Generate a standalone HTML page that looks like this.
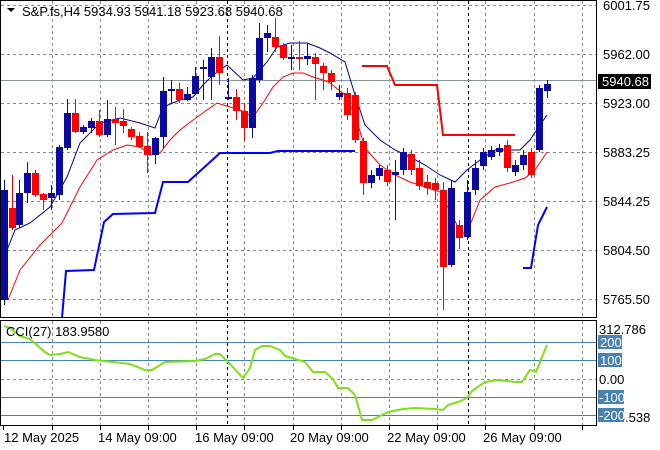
<!DOCTYPE html>
<html><head><meta charset="utf-8"><style>
html,body{margin:0;padding:0;background:#fff;}
svg{display:block;font-family:"Liberation Sans",sans-serif;font-size:13px;}
</style></head><body>
<svg id="s" width="660" height="450" xmlns="http://www.w3.org/2000/svg">
<rect width="660" height="450" fill="#fff"/>
<g id="grid" stroke="#7f8a96" stroke-dasharray="3,3" stroke-width="1"></g>
<g id="ind"></g>
<g id="c"></g>
<rect x="0.5" y="0.5" width="596" height="317" fill="none" stroke="#000"/>
<rect x="0.5" y="320.5" width="596" height="105" fill="none" stroke="#000"/>
<g fill="#000">
<text x="603" y="10">6001.75</text>
<text x="603" y="59">5962.00</text>
<text x="603" y="108">5923.00</text>
<text x="603" y="157">5883.25</text>
<text x="603" y="206">5844.25</text>
<text x="603" y="255">5804.50</text>
<text x="603" y="304">5765.50</text>
<text x="599" y="334">312.786</text>
<text x="599" y="384">0.00</text>
<text x="599" y="422">-256.538</text>
</g>
<rect x="598" y="74" width="53" height="15" fill="#000"/>
<text x="602" y="86" fill="#fff">5940.68</text>
<g fill="#4682b4"><rect x="598" y="335" width="24" height="14"/><rect x="598" y="353" width="24" height="14"/><rect x="598" y="390" width="26" height="14"/><rect x="598" y="408" width="26" height="14"/></g>
<g fill="#fff"><text x="600" y="347">200</text><text x="600" y="365">100</text><text x="599" y="402">-100</text><text x="599" y="420">-200</text></g>
<text x="22" y="16" fill="#000">S&amp;P.fs,H4  5934.93 5941.18 5923.68 5940.68</text>
<path d="M7 8h8l-4 4z" fill="#000"/>
<text x="6" y="336" fill="#000">CCI(27) 183.9580</text>
<g fill="#000">
<text x="4" y="442">12 May 2025</text>
<text x="98" y="442">14 May 09:00</text>
<text x="195" y="442">16 May 09:00</text>
<text x="290" y="442">20 May 09:00</text>
<text x="387" y="442">22 May 09:00</text>
<text x="483" y="442">26 May 09:00</text>
</g>
</svg>
<script>
var NS="http://www.w3.org/2000/svg";
function el(p,t,a){var e=document.createElementNS(NS,t);for(var k in a)e.setAttribute(k,a[k]);p.appendChild(e);return e;}
var g=document.getElementById('grid'),ind=document.getElementById('ind'),c=document.getElementById('c'),s=document.getElementById('s');
[5,54,103,152,201,250,299].forEach(function(y){el(g,'line',{x1:1,x2:596,y1:y+.5,y2:y+.5});});
el(g,'line',{x1:1,x2:596,y1:379.5,y2:379.5});
el(s,'line',{x1:3.5,x2:3.5,y1:426,y2:430,stroke:'#000'});
for(var x=51.5;x<596;x+=48.2){var xx=Math.round(x)+.5;el(g,'line',{x1:xx,x2:xx,y1:1,y2:317});el(g,'line',{x1:xx,x2:xx,y1:321,y2:425});el(s,'line',{x1:xx,x2:xx,y1:426,y2:430,stroke:'#000'});}
[227,468].forEach(function(x){el(ind,'line',{x1:x+.5,x2:x+.5,y1:1,y2:425,stroke:'#000','stroke-dasharray':'3,3'});});
el(ind,'line',{x1:1,x2:596,y1:80.5,y2:80.5,stroke:'#8a949e'});
[342,360,397,415].forEach(function(y){el(ind,'line',{x1:1,x2:596,y1:y+.5,y2:y+.5,stroke:'#4682b4'});});
function pl(pts,col,w){el(ind,'polyline',{points:pts,fill:'none',stroke:col,'stroke-width':w});}
pl("62,318 66,271 94,270 104,222 113,214 155,213 163,182 188,182 220,153 270,153 278,151 355,151","#0000ff",2);
pl("362,66 387,66 395,85 437,85 443,135 515,135","#ff0000",2);
pl("523,268 531,268 538,225 547,207","#0000ff",2);
pl("5,255 15,230 30,223 50,207 67,177 80,143 100,123 120,118 140,123 155,128 163,107 180,100 193,97 203,85 213,75 227,65 243,80 253,78 267,62 277,47 290,43 307,43 320,48 330,53 345,62 355,95 365,125 380,140 395,150 410,157 425,165 440,175 455,182 467,170 480,160 495,150 510,150 520,150 530,140 540,125 547,115","#00008b",1);
pl("8,300 20,270 40,245 62,223 80,187 97,160 113,150 127,145 140,147 150,155 160,153 170,140 180,130 193,120 207,110 217,103 230,107 240,110 253,117 263,103 273,87 283,77 293,73 303,73 313,77 323,80 330,83 345,95 355,115 365,148 380,165 395,175 410,182 425,187 440,192 452,215 462,235 470,225 480,200 495,187 510,183 525,178 535,170 547,152","#ff0000",1);
pl("4,326 10,328 20,336 30,339 45,352 50,355 60,354 68,352 80,357 95,360 130,364 145,370 152,370 165,362 195,361 205,359 215,354 220,354 228,362 243,378 250,368 255,350 262,346 270,346 280,350 285,356 295,359 305,362 313,372 325,372 333,379 338,388 348,388 355,395 362,420 372,420 380,416 388,412 403,409 415,408 435,409 443,410 448,405 458,402 467,398 472,391 485,382 498,380 515,382 522,382 530,370 536,372 542,357 547,345","#7fe01a",2);
var C=[[4,'b',190,300,180,305],[12,'r',208,228,175,230],[19,'b',193,225,180,228],[27,'b',173,193,162,203],[35,'r',173,195,170,197],[43,'r',194,200,193,210],[51,'b',193,198,185,210],[59,'b',147,195,145,200],[67,'b',113,148,99,150],[75,'r',113,132,99,133],[83,'b',127,132,125,134],[91,'b',121,128,118,133],[99,'r',121,135,110,137],[107,'b',119,135,100,137],[115,'r',119,123,107,145],[123,'r',121,126,109,133],[131,'r',129,137,127,140],[139,'r',136,147,132,148],[147,'r',146,155,132,173],[155,'b',138,155,137,164],[163,'b',91,137,77,148],[171,'b',89,91,80,103],[179,'r',89,100,83,103],[187,'b',94,100,87,101],[195,'b',76,94,67,95],[203,'b',67,69,60,100],[211,'b',57,77,48,100],[219,'r',57,73,36,85],[228,'b',97,99,78,100],[236,'r',97,111,89,120],[244,'r',111,128,103,141],[252,'b',78,128,75,138],[259,'b',38,80,23,83],[267,'b',33,38,25,52],[275,'r',37,47,18,52],[283,'r',45,58,43,60],[291,'b',57,59,45,70],[299,'r',57,59,41,70],[307,'b',56,59,43,65],[315,'r',57,64,53,100],[323,'r',66,73,63,90],[331,'r',73,82,70,90],[339,'b',93,97,85,100],[347,'r',93,115,88,120],[355,'r',95,140,92,143],[363,'r',141,183,138,195],[371,'b',175,183,170,188],[379,'b',168,176,165,180],[387,'r',170,182,165,186],[395,'b',172,175,160,220],[403,'b',152,170,148,175],[411,'r',154,170,150,175],[419,'r',168,186,160,190],[427,'r',182,188,175,195],[435,'r',183,190,178,200],[443,'r',190,267,182,310],[451,'b',188,265,180,267],[459,'r',225,238,220,249],[467,'b',192,237,180,240],[475,'b',168,190,160,195],[483,'b',152,166,148,170],[491,'b',150,157,146,160],[499,'b',148,152,144,156],[507,'r',145,168,140,172],[515,'b',165,172,160,176],[523,'b',155,165,150,170],[531,'r',152,175,148,178],[539,'b',88,150,85,152],[547,'b',84,91,80,98]];
C.forEach(function(d){var col=d[1]=='b'?'#0a0aa0':'#ff0000';el(c,'line',{x1:d[0]+.5,x2:d[0]+.5,y1:d[4],y2:d[5],stroke:col});el(c,'rect',{x:d[0]-3,y:d[2],width:7,height:Math.max(2,d[3]-d[2]),fill:col});});
</script>
</body></html>
